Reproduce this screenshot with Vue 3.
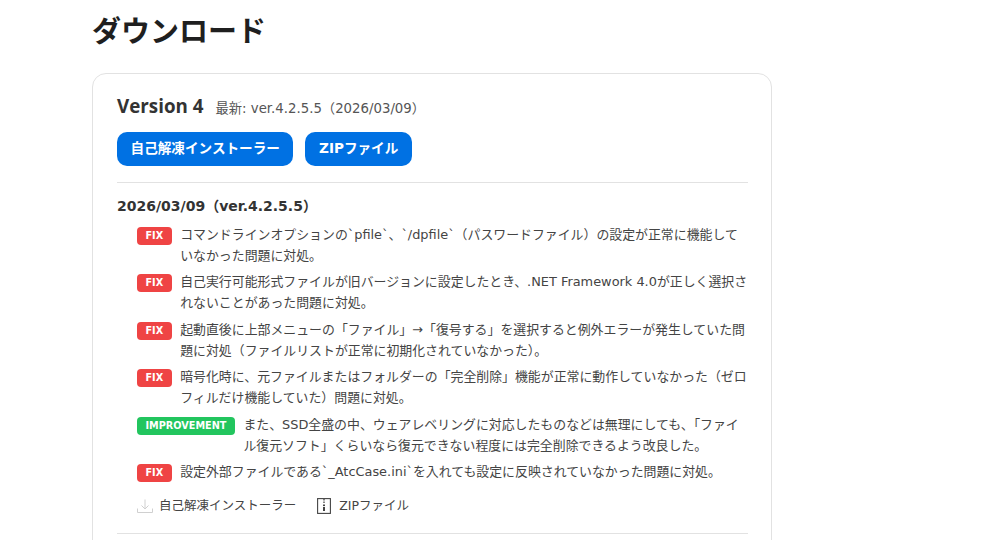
<script setup>
const items = [
  { t: 'FIX', x: 'コマンドラインオプションの`pfile`、`/dpfile`（パスワードファイル）の設定が正常に機能していなかった問題に対処。' },
  { t: 'FIX', x: '自己実行可能形式ファイルが旧バージョンに設定したとき、.NET Framework 4.0が正しく選択されないことがあった問題に対処。' },
  { t: 'FIX', x: '起動直後に上部メニューの「ファイル」→「復号する」を選択すると例外エラーが発生していた問題に対処（ファイルリストが正常に初期化されていなかった）。' },
  { t: 'FIX', x: '暗号化時に、元ファイルまたはフォルダーの「完全削除」機能が正常に動作していなかった（ゼロフィルだけ機能していた）問題に対処。' },
  { t: 'IMPROVEMENT', x: 'また、SSD全盛の中、ウェアレベリングに対応したものなどは無理にしても、「ファイル復元ソフト」くらいなら復元できない程度には完全削除できるよう改良した。' },
  { t: 'FIX', x: '設定外部ファイルである`_AtcCase.ini`を入れても設定に反映されていなかった問題に対処。' }
]
</script>

<template>
  <main class="page">
    <h1 class="title">ダウンロード</h1>
    <section class="card">
      <div class="head">
        <h2 class="ver">Version 4</h2>
        <span class="latest">最新: ver.4.2.5.5（2026/03/09）</span>
      </div>
      <div class="btns">
        <a class="btn">自己解凍インストーラー</a>
        <a class="btn">ZIPファイル</a>
      </div>
      <hr class="rule" />
      <h3 class="date">2026/03/09（ver.4.2.5.5）</h3>
      <ul class="list">
        <li v-for="(it, i) in items" :key="i" class="item">
          <span class="tag" :class="it.t === 'FIX' ? 'fix' : 'imp'">{{ it.t }}</span>
          <span class="txt">{{ it.x }}</span>
        </li>
      </ul>
      <div class="links">
        <a class="link">
          <svg width="16" height="14" viewBox="0 0 16 14" fill="none" stroke="#d0d0d0" stroke-width="1">
            <path d="M8 0.5v9M4.5 6.5 8 10l3.5-3.5M0.5 9.5v4h15v-4" />
          </svg>
          自己解凍インストーラー
        </a>
        <a class="link zip">
          <svg width="14" height="16" viewBox="0 0 14 16" fill="none" stroke="#444" stroke-width="1.1">
            <rect x="0.6" y="0.6" width="12.8" height="14.8" />
            <path d="M7 1v1.5M7 3.5v1.5" stroke-width="1.3" />
            <rect x="6" y="6.5" width="2" height="1.6" fill="#444" stroke="none" />
            <path d="M7 9v4" stroke-width="2" />
          </svg>
          ZIPファイル
        </a>
      </div>
      <hr class="rule end" />
    </section>
  </main>
</template>

<style>
html, body { margin: 0; background: #fff; }
body { height: 540px; overflow: hidden; }
</style>

<style scoped>
.page {
  width: 680px;
  margin-left: 92px;
  font-family: "DejaVu Sans", "Noto Sans CJK JP", sans-serif;
  color: #333;
  font-size: 12.9px;
  line-height: 21px;
}
.title {
  margin: 0;
  padding-top: 8px;
  height: 73px;
  box-sizing: border-box;
  font-size: 29px;
  line-height: 42px;
  font-weight: 700;
  color: #1f1f1f;
  font-family: "Noto Sans CJK JP", sans-serif;
}
.card {
  border: 1px solid #e2e2e2;
  border-radius: 14px;
  padding: 18px 23px 0 24px;
  height: 600px;
  box-sizing: border-box;
}
.head { display: flex; align-items: baseline; gap: 12px; height: 30px; }
.ver { margin: 0; font-size: 18.8px; line-height: 28px; font-weight: 700; color: #333; font-family: "Open Sans", sans-serif; }
.latest { font-size: 13.3px; color: #555; }
.btns { display: flex; gap: 12px; margin-top: 10px; }
.btn {
  height: 34px;
  line-height: 32px;
  padding: 0 13.6px;
  background: #0071e3;
  color: #fff;
  border-radius: 10px;
  font-weight: 700;
  font-size: 13.6px;
}
.rule { border: 0; border-top: 1px solid #e2e2e2; margin: 16px 0 0; }
.date { margin: 13px 0 0; font-size: 14px; line-height: 21px; font-weight: 700; color: #333; }
.list { list-style: none; margin: 8px 0 0; padding: 0 0 0 20px; }
.item { display: flex; align-items: flex-start; gap: 8.5px; margin-bottom: 6.4px; }
.tag {
  flex: none;
  min-width: 34px;
  box-sizing: border-box;
  text-align: center;
  margin-top: 2px;
  height: 18px;
  line-height: 18px;
  padding: 0 8.5px;
  border-radius: 4px;
  color: #fff;
  font-size: 9.7px;
  font-weight: 700;
}
.fix { background: #ef4444; }
.imp { background: #22c55e; }
.txt { flex: 1; color: #444; margin-top: -1px; }
.links { display: flex; align-items: center; gap: 21px; margin: 12px 0 0 20px; height: 24px; color: #444; font-size: 12.5px; }
.link { display: flex; align-items: center; gap: 6px; }
.zip { gap: 8px; }
.end { margin-top: 15px; }
</style>
